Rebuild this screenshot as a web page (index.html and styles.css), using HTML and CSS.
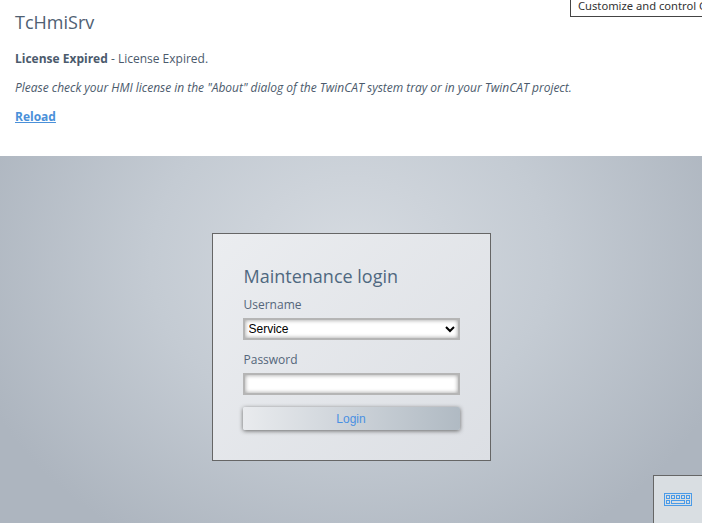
FILE: index.html
```html
<!DOCTYPE html>
<html lang="en">
<head>
<meta charset="utf-8">
<title>TcHmiSrv</title>
<link rel="stylesheet" href="styles.css">
</head>
<body>
<header class="notice">
  <h1 class="notice-title">TcHmiSrv</h1>
  <p class="notice-line"><strong>License Expired</strong> - License Expired.</p>
  <p class="notice-line"><em>Please check your HMI license in the "About" dialog of the TwinCAT system tray or in your TwinCAT project.</em></p>
  <p class="notice-line"><a class="reload" href="#">Reload</a></p>
</header>
<main class="stage">
  <form class="login">
    <h2 class="login-title">Maintenance login</h2>
    <label class="field-label" for="user">Username</label>
    <select class="control select" id="user"><option>Service</option></select>
    <label class="field-label password-label" for="pass">Password</label>
    <input class="control" id="pass" type="password">
    <button class="submit" type="button">Login</button>
  </form>
  <div class="keyboard">
    <svg width="28" height="13" viewBox="0 0 28 13" fill="none" stroke="#4a9be8" stroke-width="1">
      <rect x="0.5" y="0.5" width="27" height="12"/>
      <rect x="2.5" y="2.5" width="3" height="3"/><rect x="7.5" y="2.5" width="3" height="3"/><rect x="12.5" y="2.5" width="3" height="3"/><rect x="17.5" y="2.5" width="3" height="3"/><rect x="22.5" y="2.5" width="3" height="3"/>
      <rect x="2.5" y="7.5" width="3" height="3"/><rect x="7.5" y="7.5" width="13" height="3"/><rect x="22.5" y="7.5" width="3" height="3"/>
    </svg>
  </div>
</main>
<div class="tooltip">Customize and control Google Chrome</div>
</body>
</html>
```
FILE: styles.css
```css
* { box-sizing: border-box; }
html, body { margin: 0; height: 100%; overflow: hidden; }
body { display: flex; flex-direction: column; font-family: "Open Sans", sans-serif; color: #4b5a6c; background: #fff; }
.notice { height: 156px; padding: 9px 15px 0; flex: none; }
.notice-title { margin: 0 0 14px; font-size: 18px; line-height: 27px; font-weight: 400; color: #4f6072; }
.notice-line { margin: 0 0 11px; font-size: 12px; line-height: 18px; }
.notice-line em { letter-spacing: -0.02px; }
.notice-line strong { font-weight: 700; }
.reload { color: #4a90d9; font-weight: 700; }
.stage { position: relative; flex: 1; display: flex; justify-content: center; align-items: flex-start; padding-top: 77px; background: radial-gradient(ellipse 400px 330px at 351px 105px, #d6dbe1 0%, #c4cbd3 50%, #adb5bf 100%); }
.login { width: 279px; height: 228px; border: 1px solid #666; padding: 29px 30px 0; display: flex; flex-direction: column; background: linear-gradient(135deg, #ebedf0 0%, #dcdfe4 100%); }
.login-title { margin: 0 0 7px 1px; font-size: 18px; line-height: 26px; font-weight: 400; color: #4f6880; }
.field-label { margin-left: 1px; font-size: 12px; line-height: 17px; margin-bottom: 5px; color: #54667a; }
.password-label { margin-top: 11px; }
.control { width: 217px; height: 22px; flex: none; border: 2px solid #b5b5b5; border-radius: 0; background: #fff; box-shadow: inset 0 0 4px #999; outline: none; font-family: "Liberation Sans", sans-serif; font-size: 12px; color: #000; padding: 0 1px; }
.select { padding: 0; }
.submit { width: 217px; height: 23px; margin-top: 12px; border: 0; border-radius: 2px; background: linear-gradient(90deg, #e9ebee 0%, #b0bac3 100%); box-shadow: 0 1px 4px #666; font-family: "Liberation Sans", sans-serif; font-size: 12px; color: #4a90e2; padding: 0; }
.keyboard { position: absolute; right: 0; bottom: 0; width: 49px; height: 48px; border: solid #666; border-width: 1px 0 0 1px; background: #d9dee2; display: flex; justify-content: center; align-items: center; }
.tooltip { position: absolute; top: -5px; left: 570px; height: 22px; width: 132px; overflow: hidden; border: 1px solid #444; border-right: 0; background: #fff; padding: 0 0 0 7px; font-family: "Noto Sans", sans-serif; font-size: 11.2px; line-height: 20px; color: #333; white-space: nowrap; }
```
